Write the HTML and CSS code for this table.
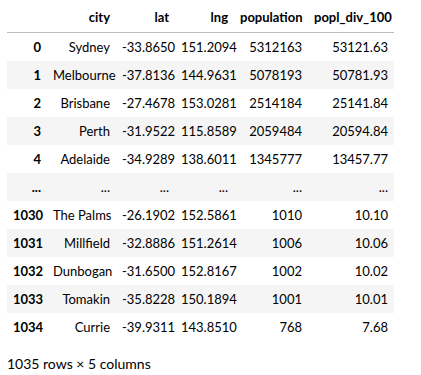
FILE: index.html
```html
<!DOCTYPE html>
<html lang="en">

<head>
  <meta charset="utf-8">
  <title>dataframe</title>
  <link rel="stylesheet" href="styles.css">
</head>

<body>
  <div class="output">
    <table class="dataframe">
      <colgroup>
        <col class="c-idx">
        <col class="c-city">
        <col class="c-lat">
        <col class="c-lng">
        <col class="c-pop">
        <col class="c-div">
      </colgroup>
      <thead>
        <tr>
          <th></th>
          <th>city</th>
          <th>lat</th>
          <th>lng</th>
          <th>population</th>
          <th>popl_div_100</th>
        </tr>
      </thead>
      <tbody>
        <tr>
          <th>0</th>
          <td>Sydney</td>
          <td>-33.8650</td>
          <td>151.2094</td>
          <td>5312163</td>
          <td>53121.63</td>
        </tr>
        <tr>
          <th>1</th>
          <td>Melbourne</td>
          <td>-37.8136</td>
          <td>144.9631</td>
          <td>5078193</td>
          <td>50781.93</td>
        </tr>
        <tr>
          <th>2</th>
          <td>Brisbane</td>
          <td>-27.4678</td>
          <td>153.0281</td>
          <td>2514184</td>
          <td>25141.84</td>
        </tr>
        <tr>
          <th>3</th>
          <td>Perth</td>
          <td>-31.9522</td>
          <td>115.8589</td>
          <td>2059484</td>
          <td>20594.84</td>
        </tr>
        <tr>
          <th>4</th>
          <td>Adelaide</td>
          <td>-34.9289</td>
          <td>138.6011</td>
          <td>1345777</td>
          <td>13457.77</td>
        </tr>
        <tr>
          <th>...</th>
          <td>...</td>
          <td>...</td>
          <td>...</td>
          <td>...</td>
          <td>...</td>
        </tr>
        <tr>
          <th>1030</th>
          <td>The Palms</td>
          <td>-26.1902</td>
          <td>152.5861</td>
          <td>1010</td>
          <td>10.10</td>
        </tr>
        <tr>
          <th>1031</th>
          <td>Millfield</td>
          <td>-32.8886</td>
          <td>151.2614</td>
          <td>1006</td>
          <td>10.06</td>
        </tr>
        <tr>
          <th>1032</th>
          <td>Dunbogan</td>
          <td>-31.6500</td>
          <td>152.8167</td>
          <td>1002</td>
          <td>10.02</td>
        </tr>
        <tr>
          <th>1033</th>
          <td>Tomakin</td>
          <td>-35.8228</td>
          <td>150.1894</td>
          <td>1001</td>
          <td>10.01</td>
        </tr>
        <tr>
          <th>1034</th>
          <td>Currie</td>
          <td>-39.9311</td>
          <td>143.8510</td>
          <td>768</td>
          <td>7.68</td>
        </tr>
      </tbody>
    </table>
    <p class="shape">1035 rows × 5 columns</p>
  </div>
</body>

</html>
```

FILE: styles.css
```css
html,
body {
  margin: 0;
  padding: 0;
  background: #fff;
}

body {
  font-family: Lato, "Open Sans", sans-serif;
  font-size: 13px;
  color: #000;
}

.output {
  padding: 4px 7px 0;
}

.dataframe {
  table-layout: fixed;
  width: 387px;
  border-collapse: collapse;
  border-spacing: 0;
}

.c-idx {
  width: 40px;
}

.c-city {
  width: 69px;
}

.c-lat,
.c-lng {
  width: 59px;
}

.c-pop {
  width: 74px;
}

.c-div {
  width: 86px;
}

.dataframe th,
.dataframe td {
  padding: 0 6px;
  height: 28px;
  line-height: 28px;
  text-align: right;
  white-space: nowrap;
  box-sizing: border-box;
}

.dataframe th {
  font-weight: bold;
}

.dataframe thead th {
  height: 28px;
  line-height: 27px;
  border-bottom: 1px solid #bdbdbd;
}

.dataframe tbody tr:nth-child(odd) {
  background: #fff;
}

.dataframe tbody tr:nth-child(even) {
  background: #f5f5f5;
}

.shape {
  margin: 14px 0 0;
  font-size: 14px;
  line-height: 18px;
}
```
